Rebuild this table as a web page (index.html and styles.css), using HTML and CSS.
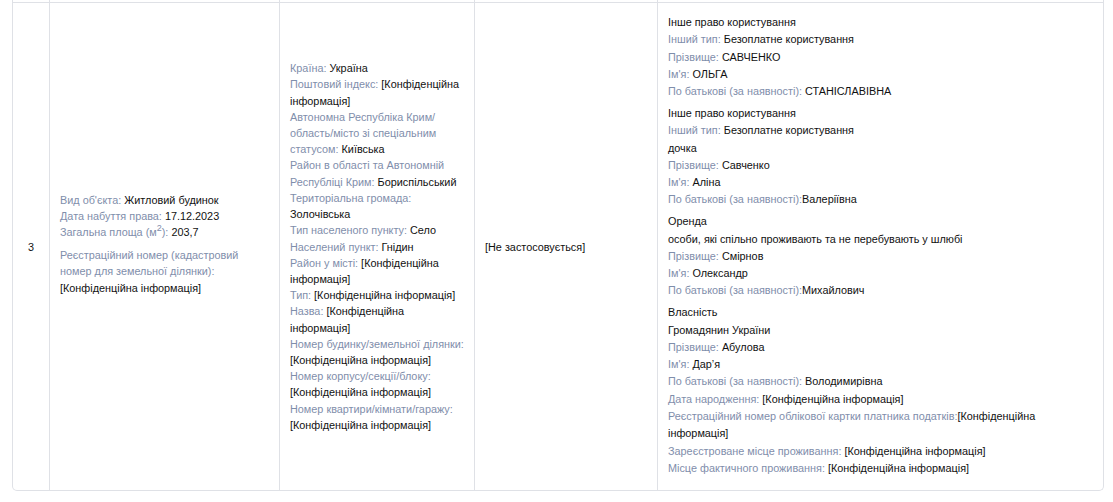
FILE: index.html
```html
<!DOCTYPE html>
<html lang="uk">
<head>
<meta charset="utf-8">
<title>Об'єкт</title>
<link rel="stylesheet" href="styles.css">
</head>
<body>
<div class="wrap">
  <div class="grid">
    <div class="cell prev"></div>
    <div class="cell prev"></div>
    <div class="cell prev"></div>
    <div class="cell prev"></div>
    <div class="cell prev"></div>

    <div class="cell num">3</div>

    <div class="cell mid obj">
      <div class="block">
        <div><span class="lbl">Вид об'єкта:</span> Житловий будинок</div>
        <div><span class="lbl">Дата набуття права:</span> 17.12.2023</div>
        <div><span class="lbl">Загальна площа (м<sup>2</sup>):</span> 203,7</div>
      </div>
      <div class="block gap">
        <span class="lbl">Реєстраційний номер (кадастровий номер для земельної ділянки):</span><br>[Конфіденційна інформація]
      </div>
    </div>

    <div class="cell mid addr">
      <div><span class="lbl">Країна:</span> Україна</div>
      <div><span class="lbl">Поштовий індекс:</span> [Конфіденційна інформація]</div>
      <div><span class="lbl">Автономна Республіка Крим/ область/місто зі спеціальним статусом:</span> Київська</div>
      <div><span class="lbl">Район в області та Автономній Республіці Крим:</span> Бориспільський</div>
      <div><span class="lbl">Територіальна громада:</span> Золочівська</div>
      <div><span class="lbl">Тип населеного пункту:</span> Село</div>
      <div><span class="lbl">Населений пункт:</span> Гнідин</div>
      <div><span class="lbl">Район у місті:</span> [Конфіденційна інформація]</div>
      <div><span class="lbl">Тип:</span> [Конфіденційна інформація]</div>
      <div><span class="lbl">Назва:</span> [Конфіденційна інформація]</div>
      <div><span class="lbl">Номер будинку/земельної ділянки:</span> [Конфіденційна інформація]</div>
      <div><span class="lbl">Номер корпусу/секції/блоку:</span> [Конфіденційна інформація]</div>
      <div><span class="lbl">Номер квартири/кімнати/гаражу:</span> [Конфіденційна інформація]</div>
    </div>

    <div class="cell mid">[Не застосовується]</div>

    <div class="cell rights">
      <div class="group">
        <div>Інше право користування</div>
        <div><span class="lbl">Інший тип:</span> Безоплатне користування</div>
        <div><span class="lbl">Прізвище:</span> САВЧЕНКО</div>
        <div><span class="lbl">Ім'я:</span> ОЛЬГА</div>
        <div><span class="lbl">По батькові (за наявності):</span> СТАНІСЛАВІВНА</div>
      </div>
      <div class="group">
        <div>Інше право користування</div>
        <div><span class="lbl">Інший тип:</span> Безоплатне користування</div>
        <div>дочка</div>
        <div><span class="lbl">Прізвище:</span> Савченко</div>
        <div><span class="lbl">Ім'я:</span> Аліна</div>
        <div><span class="lbl">По батькові (за наявності):</span>Валеріївна</div>
      </div>
      <div class="group">
        <div>Оренда</div>
        <div>особи, які спільно проживають та не перебувають у шлюбі</div>
        <div><span class="lbl">Прізвище:</span> Смірнов</div>
        <div><span class="lbl">Ім'я:</span> Олександр</div>
        <div><span class="lbl">По батькові (за наявності):</span>Михайлович</div>
      </div>
      <div class="group">
        <div>Власність</div>
        <div>Громадянин України</div>
        <div><span class="lbl">Прізвище:</span> Абулова</div>
        <div><span class="lbl">Ім'я:</span> Дар’я</div>
        <div><span class="lbl">По батькові (за наявності):</span> Володимирівна</div>
        <div><span class="lbl">Дата народження:</span> [Конфіденційна інформація]</div>
        <div><span class="lbl">Реєстраційний номер облікової картки платника податків:</span>[Конфіденційна інформація]</div>
        <div><span class="lbl">Зареєстроване місце проживання:</span> [Конфіденційна інформація]</div>
        <div><span class="lbl">Місце фактичного проживання:</span> [Конфіденційна інформація]</div>
      </div>
    </div>
  </div>
</div>
</body>
</html>
```

FILE: styles.css
```css
html, body {
  margin: 0;
  padding: 0;
  background: #ffffff;
}

body {
  font-family: "Liberation Sans", Arial, sans-serif;
  font-size: 10.85px;
  color: #111111;
}

.wrap {
  margin-left: 12px;
  width: 1092px;
  box-sizing: border-box;
  border: 1px solid #dfe1e6;
  border-top: none;
  border-radius: 0 0 5px 5px;
}

.grid {
  display: grid;
  grid-template-columns: 36px 230px 195px 183px 1fr;
  grid-template-rows: 2px auto;
}

.cell {
  box-sizing: border-box;
  border-left: 1px solid #dfe1e6;
  padding: 0 10px;
}

.cell:nth-child(5n+1) {
  border-left: none;
}

.prev {
  padding: 0;
}

.num,
.mid,
.rights {
  border-top: 1px solid #dfe1e6;
}

.num {
  display: flex;
  align-items: center;
  justify-content: center;
  padding: 0;
}

.mid {
  display: flex;
  flex-direction: column;
  justify-content: center;
  line-height: 16.2px;
}

.obj {
  padding-bottom: 6px;
}

.addr {
  padding-right: 8px;
}

.block.gap {
  margin-top: 7px;
}

sup {
  font-size: 9px;
  line-height: 0;
  vertical-align: 5px;
}

.lbl {
  color: #7f8eab;
}

.rights {
  padding: 11px 10px 13px;
  line-height: 17.3px;
}

.group + .group {
  margin-top: 4.5px;
}
```
